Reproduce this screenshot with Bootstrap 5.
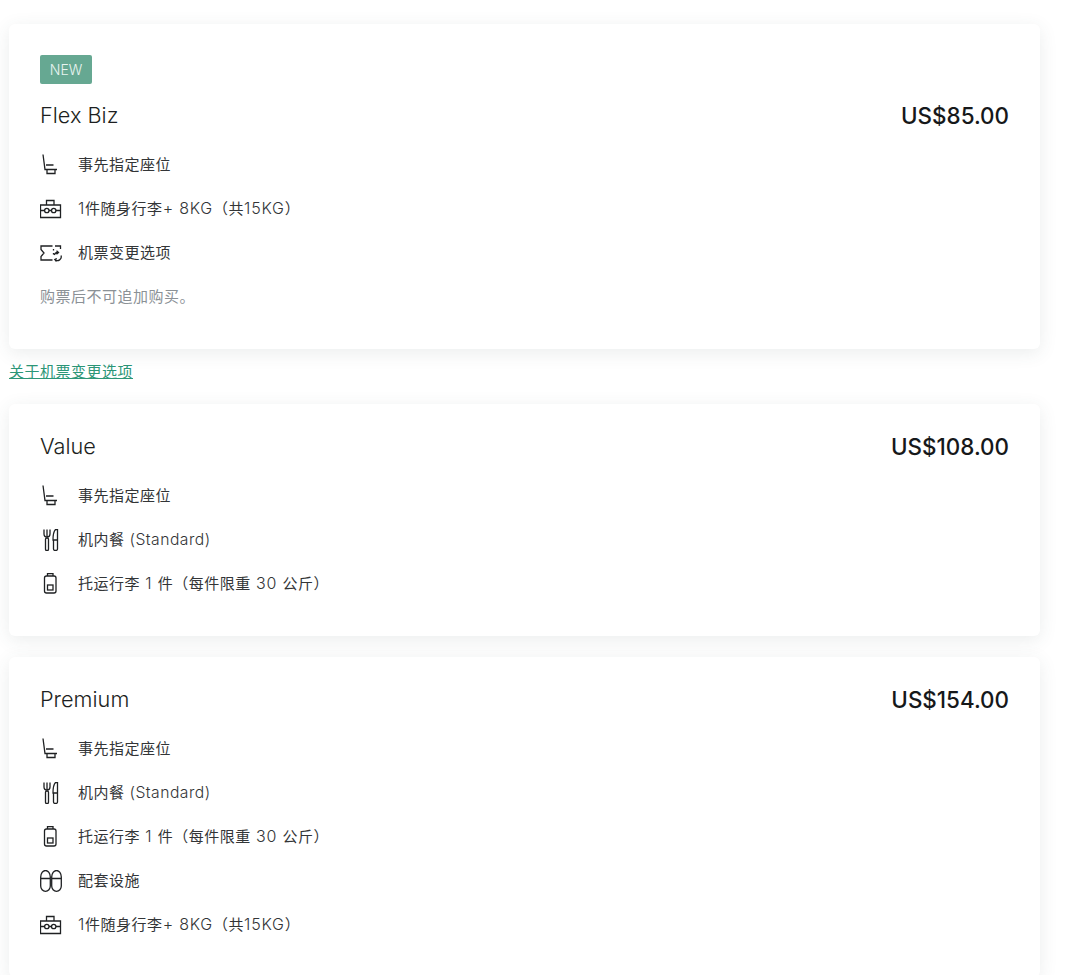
<!DOCTYPE html>
<html lang="zh-CN">
<head>
  <meta charset="UTF-8" />
  <title>Fare options</title>
  <meta name="viewport" content="width=device-width, initial-scale=1">
  <link href="https://cdn.jsdelivr.net/npm/bootstrap@5.3.3/dist/css/bootstrap.min.css" rel="stylesheet">
  <style>
    body {
      background-color: #fff;
      font-family: Inter, "Noto Sans CJK SC", sans-serif;
      color: #2b2d2f;
      height: 975px;
      overflow: hidden;
    }
    .page-wrap {
      width: 1031px;
      margin-left: 9px;
      padding-top: 24px;
    }
    .fare-card {
      border: 0;
      border-radius: 6px;
      box-shadow: 0 4px 18px rgba(60, 80, 80, 0.1);
      padding: 31px 31px 30px 31px;
    }
    .new-tag {
      width: 52px;
      height: 29px;
      background-color: #66a892;
      color: #e9f4f0;
      font-size: 14px;
      font-weight: 300;
      border-radius: 2px;
      margin-bottom: 20px;
    }
    .fare-head {
      height: 24px;
      margin-bottom: 15px;
    }
    .fare-name {
      font-size: 21.7px;
      font-weight: 300;
      color: #1d1f21;
      margin-top: -1px;
    }
    .fare-price {
      font-size: 22.4px;
      font-weight: 500;
      color: #16181a;
    }
    .perk-row {
      height: 44px;
      font-size: 15px;
      letter-spacing: 0.5px;
      color: #333537;
    }
    .latin-run {
      font-size: 16px;
      font-weight: 300;
      line-height: 1;
      white-space: pre;
    }
    .latin-tight {
      font-size: 15.7px;
    }
    .latin-wide {
      letter-spacing: 0.8px;
    }
    .perk-icon {
      width: 22px;
      height: 22px;
      margin-right: 16px;
      flex: none;
      fill: none;
      stroke: #1f2123;
      stroke-width: 1.3;
    }
    .perk-note {
      height: 44px;
      font-size: 15px;
      letter-spacing: 0.5px;
      color: #8b9196;
    }
    .change-link {
      display: block;
      height: 55px;
      padding-top: 12px;
      font-size: 15px;
      letter-spacing: 0.5px;
      line-height: 22px;
      color: #2c9677;
    }
    .card-gap {
      margin-top: 21px;
    }
  </style>
</head>
<body>
  <svg width="0" height="0" class="d-block">
    <symbol id="ic-seat" viewBox="0 0 22 22">
      <path d="M3 0.500l2 15h12M6 11h7.500M7 15.500v4h8v-4" />
    </symbol>
    <symbol id="ic-bag" viewBox="0 0 22 22">
      <path d="M0.500 7h20v12.500h-20zM6.500 7v-4.500h7.500v4.500M0.500 12.500h4M9 12.500h2.500M16 12.500h4.500" />
      <circle cx="6.800" cy="12.500" r="2.200" />
      <circle cx="13.700" cy="12.500" r="2.200" />
    </symbol>
    <symbol id="ic-ticket" viewBox="0 0 22 22">
      <path d="M12.500 4h-11.500v3.500l3 3.500-3 3.500v3.500h11.500M15 4h5.500v3M13.500 7v1.500M13.500 11v1.500" />
      <path d="M21 13.500a3.800 3.800 0 0 1-6 4.200M14.200 13a3.800 3.800 0 0 1 3.800-2.500M16.500 8.800l2 1.700-2 1.700M16.500 19.500l-1.700-2 2-1" />
    </symbol>
    <symbol id="ic-meal" viewBox="0 0 22 22">
      <path d="M4 0.500v4.500a3 3 0 0 0 6 0v-4.500M7 0.500v8" />
      <rect x="5.500" y="9" width="3" height="12.500" rx="1.300" />
      <path d="M15.500 0.500c-2 2-2.500 6-2.500 10.500h4.500v-10.500zM13.500 11v9a2 1.500 0 0 0 4 0v-9" />
    </symbol>
    <symbol id="ic-case" viewBox="0 0 22 22">
      <path d="M7.500 3v-2.500h5.500v2.500" />
      <rect x="4.500" y="3" width="11.500" height="17" rx="2" />
      <rect x="7.500" y="12" width="5.500" height="5" />
    </symbol>
    <symbol id="ic-slippers" viewBox="0 0 22 22">
      <path d="M0.700 7a4.800 6.500 0 0 1 9.600 0v9a4.800 5.300 0 0 1-9.600 0zM0.700 8.500h9.600M11.700 7a4.800 6.500 0 0 1 9.600 0v9a4.800 5.300 0 0 1-9.600 0zM11.700 8.500h9.600" />
    </symbol>
  </svg>

  <div class="page-wrap">
    <div class="card fare-card">
      <div class="new-tag d-flex align-items-center justify-content-center">NEW</div>
      <div class="fare-head d-flex justify-content-between align-items-center">
        <span class="fare-name">Flex Biz</span>
        <span class="fare-price">US$85.00</span>
      </div>
      <div class="perk-row d-flex align-items-center"><svg class="perk-icon"><use href="#ic-seat" /></svg><span>事先指定座位</span></div>
      <div class="perk-row d-flex align-items-center"><svg class="perk-icon"><use href="#ic-bag" /></svg><span><span class="latin-run latin-wide">1</span>件随身行李<span class="latin-run latin-wide">+ 8KG</span>（共<span class="latin-run latin-wide">15KG</span>）</span></div>
      <div class="perk-row d-flex align-items-center"><svg class="perk-icon"><use href="#ic-ticket" /></svg><span>机票变更选项</span></div>
      <div class="perk-note d-flex align-items-center">购票后不可追加购买。</div>
    </div>
    <a href="#" class="change-link">关于机票变更选项</a>

    <div class="card fare-card">
      <div class="fare-head d-flex justify-content-between align-items-center">
        <span class="fare-name">Value</span>
        <span class="fare-price">US$108.00</span>
      </div>
      <div class="perk-row d-flex align-items-center"><svg class="perk-icon"><use href="#ic-seat" /></svg><span>事先指定座位</span></div>
      <div class="perk-row d-flex align-items-center"><svg class="perk-icon"><use href="#ic-meal" /></svg><span>机内餐<span class="latin-run latin-tight"> (Standard)</span></span></div>
      <div class="perk-row d-flex align-items-center"><svg class="perk-icon"><use href="#ic-case" /></svg><span>托运行李<span class="latin-run latin-wide"> 1 </span>件（每件限重<span class="latin-run latin-wide"> 30 </span>公斤）</span></div>
    </div>

    <div class="card fare-card card-gap">
      <div class="fare-head d-flex justify-content-between align-items-center">
        <span class="fare-name">Premium</span>
        <span class="fare-price">US$154.00</span>
      </div>
      <div class="perk-row d-flex align-items-center"><svg class="perk-icon"><use href="#ic-seat" /></svg><span>事先指定座位</span></div>
      <div class="perk-row d-flex align-items-center"><svg class="perk-icon"><use href="#ic-meal" /></svg><span>机内餐<span class="latin-run latin-tight"> (Standard)</span></span></div>
      <div class="perk-row d-flex align-items-center"><svg class="perk-icon"><use href="#ic-case" /></svg><span>托运行李<span class="latin-run latin-wide"> 1 </span>件（每件限重<span class="latin-run latin-wide"> 30 </span>公斤）</span></div>
      <div class="perk-row d-flex align-items-center"><svg class="perk-icon"><use href="#ic-slippers" /></svg><span>配套设施</span></div>
      <div class="perk-row d-flex align-items-center"><svg class="perk-icon"><use href="#ic-bag" /></svg><span><span class="latin-run latin-wide">1</span>件随身行李<span class="latin-run latin-wide">+ 8KG</span>（共<span class="latin-run latin-wide">15KG</span>）</span></div>
    </div>
  </div>
  <script src="https://cdn.jsdelivr.net/npm/bootstrap@5.3.3/dist/js/bootstrap.bundle.min.js"></script>
</body>
</html>
